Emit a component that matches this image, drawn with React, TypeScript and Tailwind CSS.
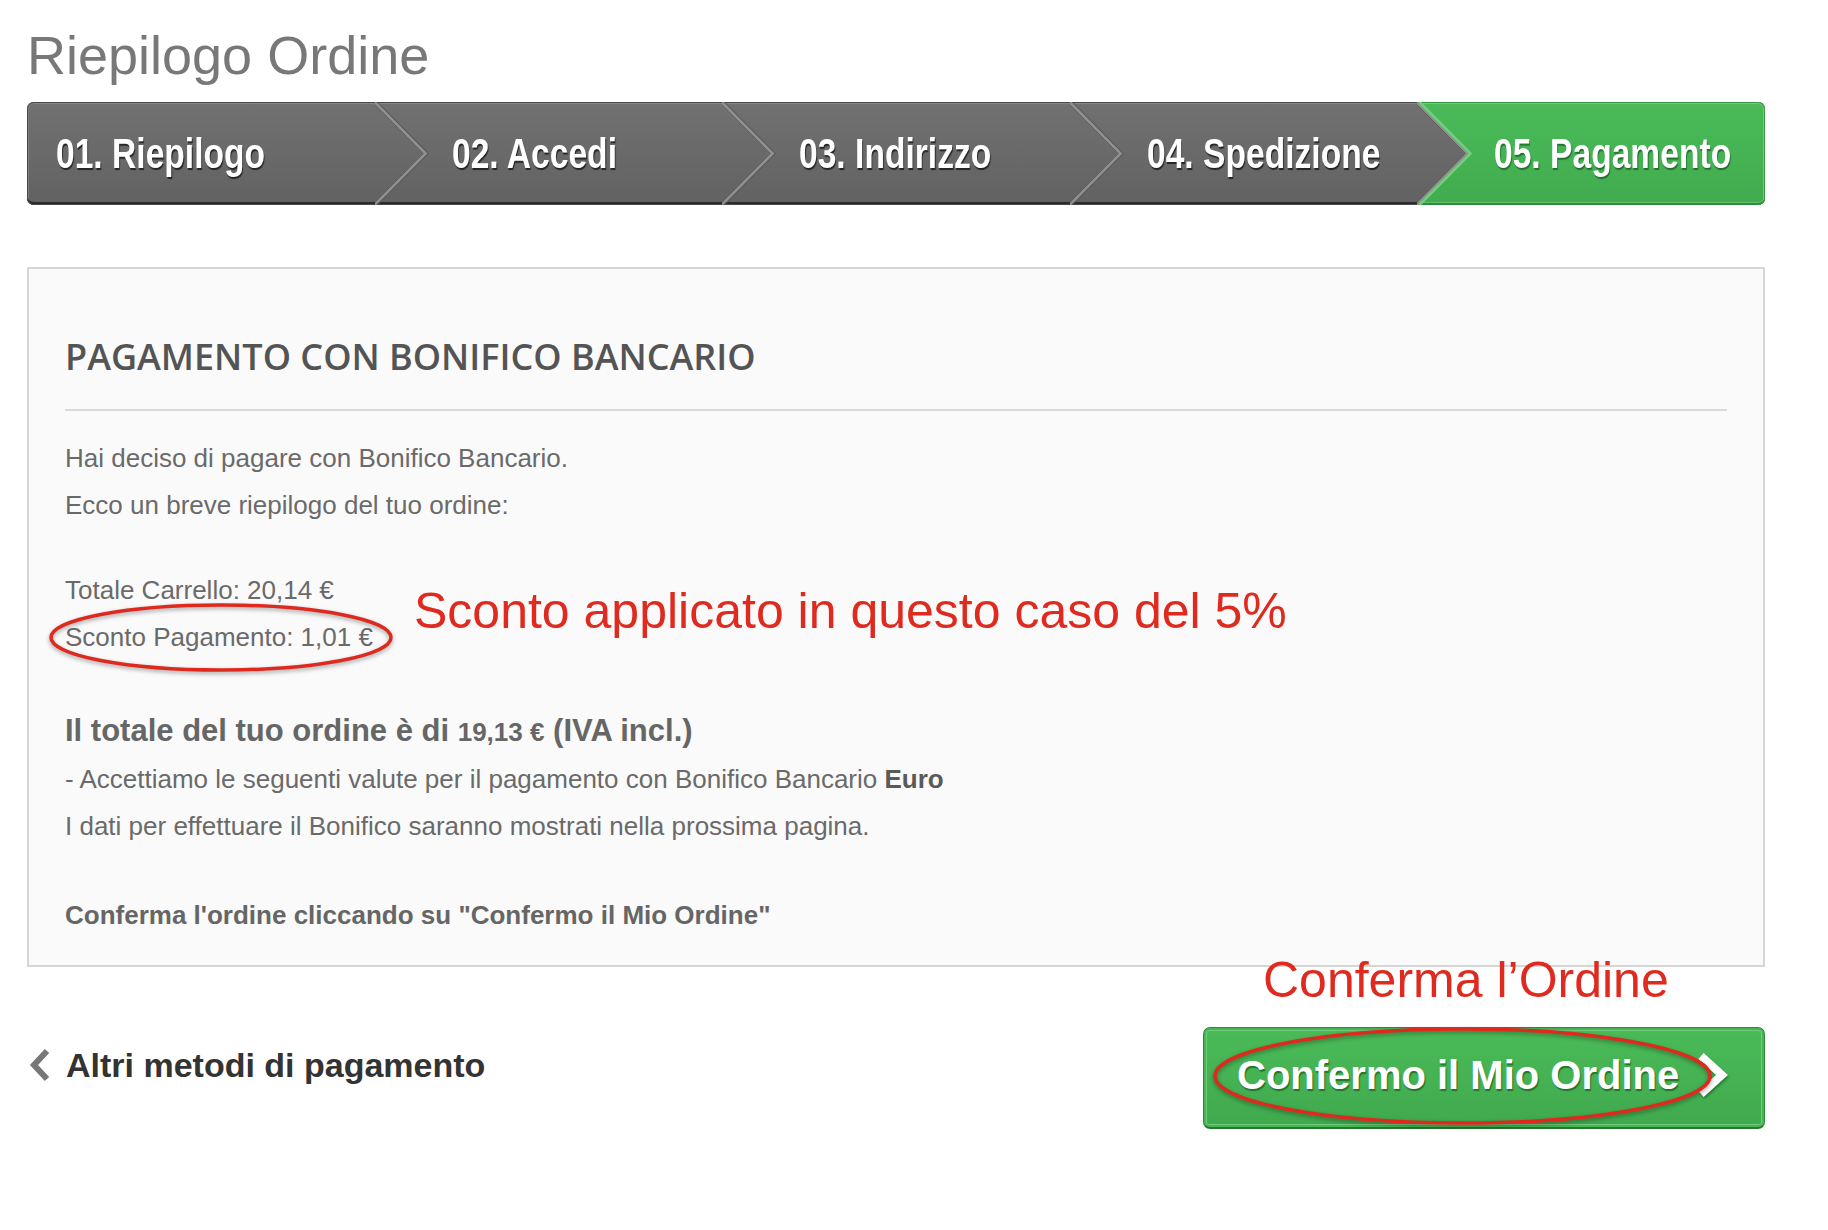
import React from "react";

const steps = [
  "01. Riepilogo",
  "02. Accedi",
  "03. Indirizzo",
  "04. Spedizione",
  "05. Pagamento",
];

// the ">" edge between two steps, drawn over the start of the next one
const Separator = ({ green }: { green?: boolean }) => (
  <svg
    className="absolute left-full top-0 z-10 h-[103px] w-[58px]"
    viewBox="0 0 58 103"
    preserveAspectRatio="none"
  >
    <polyline points="-2.5,0 48.5,51.5 -2.5,103" fill="none" stroke="#525252" strokeWidth="1" />
    <polyline points="-0.5,0 50.5,51.5 -0.5,103" fill="none" stroke="#909090" strokeWidth="2.5" />
    <polyline
      points="2.5,0 53.5,51.5 2.5,103"
      fill="none"
      stroke={green ? "#73cf7e" : "#565656"}
      strokeWidth={green ? 2.5 : 1}
    />
  </svg>
);

const StepBar = () => (
  <div className="mt-[15px] flex h-[103px] w-[1738px] overflow-hidden rounded-[7px] bg-gradient-to-b from-[#717171] to-[#626262] shadow-[inset_0_0_0_1px_#474747,inset_0_-3px_0_#2c2c2c,inset_0_2px_0_#868686,inset_2px_0_0_#7c7c7c]">
    {steps.map((label, i) => {
      const last = i === steps.length - 1;
      return (
        <div
          key={label}
          className={`relative flex min-w-0 shrink-0 grow-0 basis-1/5 items-center ${i === 0 ? "pl-[29px]" : "pl-[77px]"} ${
            last
              ? "rounded-r-[7px] bg-gradient-to-b from-[#4abb58] to-[#41ab4f] [clip-path:polygon(0_0,100%_0,100%_100%,0_100%,51px_50%)] shadow-[inset_0_1px_0_#379844,inset_-1px_0_0_#379844,inset_0_-2px_0_#2f8a3b,inset_0_2px_0_#6fcd7a,inset_-2px_0_0_#6fcd7a,inset_0_-3px_0_#62c26d]"
              : ""
          }`}
        >
          <span
            className={`inline-block origin-left scale-x-[0.8] whitespace-nowrap text-[42px] font-bold leading-none text-white ${
              last
                ? "[text-shadow:1px_2px_1px_rgba(25,90,35,0.75)]"
                : "[text-shadow:1px_2px_1px_rgba(0,0,0,0.65)]"
            }`}
          >
            {label}
          </span>
          {!last && <Separator green={i === steps.length - 2} />}
        </div>
      );
    })}
  </div>
);

const App = () => {
  return (
    <div className="relative min-h-[1230px] w-full bg-white pl-[27px] pt-[23px] font-['Liberation_Sans',Arial,sans-serif]">
      <h1 className="h-[64px] text-[54px] leading-[64px] text-[#787878]">Riepilogo Ordine</h1>

      <StepBar />

      <div className="mt-[62px] w-[1738px] border-2 border-[#d6d6d6] bg-[#fafafa] px-[36px] pb-[26px] pt-[66px] text-[26px] text-[#6a6a6a]">
        <h2 className="h-[44px] font-['Open_Sans',sans-serif] text-[36px] font-semibold uppercase leading-[44px] text-[#545454]">
          Pagamento con Bonifico Bancario
        </h2>
        <div className="mt-[30px] h-[2px] bg-[#d9d9d9]" />

        <div className="mt-[24px] leading-[47px]">Hai deciso di pagare con Bonifico Bancario.</div>
        <div className="leading-[47px]">Ecco un breve riepilogo del tuo ordine:</div>

        <div className="mt-[38px] leading-[47px]">Totale Carrello: 20,14 €</div>
        <div className="leading-[47px]">Sconto Pagamento: 1,01 €</div>

        <div className="mt-[46px] text-[31px] font-bold leading-[47px] text-[#666]">
          Il totale del tuo ordine è di <span className="text-[26px]">19,13 €</span> (IVA incl.)
        </div>
        <div className="leading-[47px]">
          - Accettiamo le seguenti valute per il pagamento con Bonifico Bancario{" "}
          <b className="font-bold text-[#5a5a5a]">Euro</b>
        </div>
        <div className="leading-[47px]">I dati per effettuare il Bonifico saranno mostrati nella prossima pagina.</div>

        <div className="mt-[42px] font-bold leading-[47px] text-[#666]">
          Conferma l'ordine cliccando su "Confermo il Mio Ordine"
        </div>
      </div>

      <div className="mt-[60px] flex w-[1738px] items-start justify-between">
        <a className="ml-[2px] mt-[18px] flex h-[40px] items-center gap-[15px] text-[34px] font-bold text-[#333]">
          <svg className="h-[34px] w-[22px]" viewBox="0 0 22 34">
            <polyline points="18,3 5,17 18,31" fill="none" stroke="#777" strokeWidth="6" />
          </svg>
          Altri metodi di pagamento
        </a>

        <button className="flex h-[102px] w-[562px] items-center rounded-[7px] border border-b-2 border-[#2e8a3a] border-b-[#27782f] bg-gradient-to-b from-[#4abb58] to-[#40a94e] pb-[5px] pl-[33px] shadow-[inset_0_0_0_2px_#46b554,inset_0_0_0_3px_#70cc7b]">
          <span className="text-[40px] font-bold leading-none text-white [text-shadow:1px_2px_1px_rgba(20,90,30,0.7)]">
            Confermo il Mio Ordine
          </span>
          <svg className="ml-[15px] h-[46px] w-[38px] drop-shadow-[1px_2px_1px_rgba(20,90,30,0.6)]" viewBox="0 0 38 46">
            <polyline points="7,4 28,23 7,42" fill="none" stroke="#fff" strokeWidth="8" />
          </svg>
        </button>
      </div>

      {/* annotations */}
      <svg
        className="absolute left-[47px] top-[601px] h-[73px] w-[348px] drop-shadow-[0_2px_2px_rgba(0,0,0,0.35)]"
        viewBox="0 0 348 73"
      >
        <ellipse cx="174" cy="36.5" rx="170" ry="32.5" fill="none" stroke="#de2a1e" strokeWidth="3.5" />
      </svg>
      <div className="absolute left-[414px] top-[586px] whitespace-nowrap text-[50px] leading-[50px] text-[#df2a1f]">
        Sconto applicato in questo caso del 5%
      </div>

      <div className="absolute left-[1263px] top-[955px] whitespace-nowrap text-[50px] leading-[50px] text-[#df2a1f]">
        Conferma l’Ordine
      </div>
      <svg
        className="absolute left-[1211px] top-[1025px] h-[102px] w-[503px] drop-shadow-[0_2px_2px_rgba(0,0,0,0.35)]"
        viewBox="0 0 503 102"
      >
        <ellipse cx="251.5" cy="51" rx="247.5" ry="47" fill="none" stroke="#de2a1e" strokeWidth="3.5" />
      </svg>
    </div>
  );
};

export default App;
